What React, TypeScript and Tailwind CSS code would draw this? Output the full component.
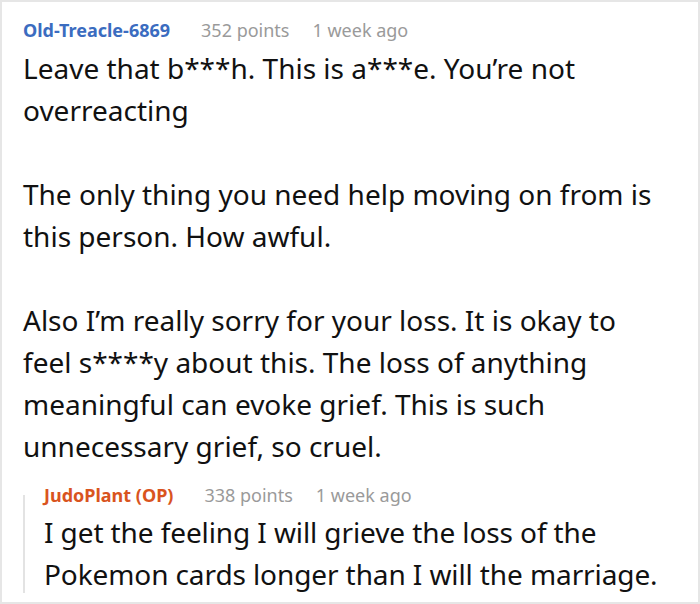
import React from "react";

const font = { fontFamily: '"Noto Sans", "Open Sans", sans-serif' };

function Meta({ name, points, color }: { name: string; points: string; color: string }) {
  return (
    <div className="flex items-baseline text-[18px] leading-[24px]">
      <span className={`font-bold ${color}`}>{name}</span>
      <span className="ml-[31px] text-[#9a9a9a]">{points}</span>
      <span className="ml-[23px] text-[#9a9a9a]">1 week ago</span>
    </div>
  );
}

export default function App() {
  return (
    <div style={font} className="w-[700px] h-[604px] bg-white border-2 border-[#e6e6e6] overflow-hidden">
      <div className="pl-[21px] pt-[16px]">
        <Meta name="Old-Treacle-6869" points="352 points" color="text-[#3b6cc0]" />
        <div className="text-[28px] leading-[42px] text-[#111] mt-[5px] whitespace-nowrap">
          <p>
            Leave that b***h. This is a***e. You’re not
            <br />
            overreacting
          </p>
          <p className="mt-[42px]">
            The only thing you need help moving on from is
            <br />
            this person. How awful.
          </p>
          <p className="mt-[42px]">
            Also I’m really sorry for your loss. It is okay to
            <br />
            feel s****y about this. The loss of anything
            <br />
            meaningful can evoke grief. This is such
            <br />
            unnecessary grief, so cruel.
          </p>
        </div>
        <div className="mt-[16px] flex whitespace-nowrap">
          <div className="mt-[12px] mb-[2px] w-[2px] bg-[#e3e3e3]" />
          <div className="pl-[19px]">
            <Meta name="JudoPlant (OP)" points="338 points" color="text-[#d9541e]" />
            <p className="mt-[4px] text-[28px] leading-[42px] text-[#111] tracking-[-0.1px]">
              I get the feeling I will grieve the loss of the
              <br />
              Pokemon cards longer than I will the marriage.
            </p>
          </div>
        </div>
      </div>
    </div>
  );
}
